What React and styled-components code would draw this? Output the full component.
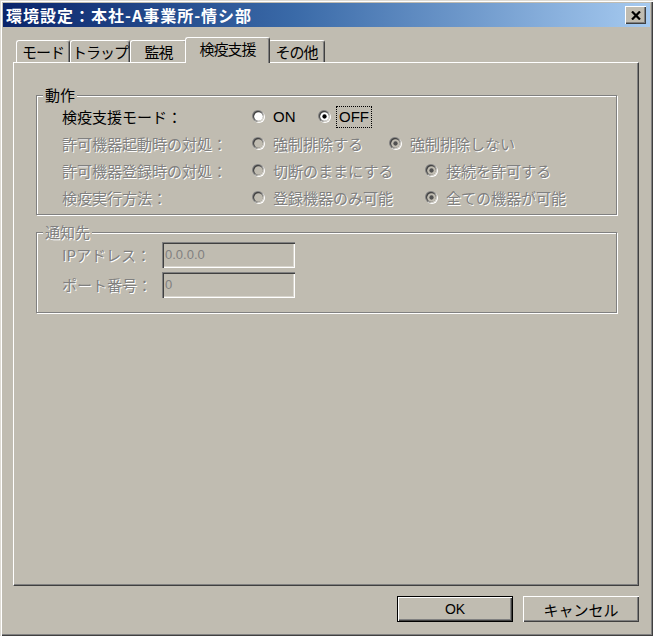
import React from "react"
import styled, { createGlobalStyle, css } from "styled-components"

const face = "#c0bcb1"
const shade = "#808080"
const dark = "#404040"
const jp = `"Noto Sans CJK JP", "Noto Sans", sans-serif`

const GlobalStyle = createGlobalStyle`
  body {
    margin: 0;
    background: ${face};
    font-family: ${jp};
  }
`

const Window = styled.div`
  width: 653px;
  height: 636px;
  box-sizing: border-box;
  padding: 3px;
  background: ${face};
  display: flex;
  flex-direction: column;
  box-shadow: inset 1px 1px 0 #dedbd4, inset 2px 2px 0 #fff,
    inset -1px -1px 0 ${dark}, inset -2px -2px 0 ${shade};
`

const TitleBar = styled.div`
  height: 24px;
  display: flex;
  align-items: center;
  justify-content: space-between;
  padding: 0 4px 0 3px;
  background: linear-gradient(90deg, #0a246a 0%, #3a6aa8 45%, #a6caf0 100%);
`

const Title = styled.div`
  color: #fff;
  font-weight: 700;
  font-size: 16px;
  letter-spacing: 1px;
  line-height: 20px;
  white-space: nowrap;
`

const CloseButton = styled.div`
  width: 21px;
  height: 18px;
  box-sizing: border-box;
  display: flex;
  align-items: center;
  justify-content: center;
  background: ${face};
  box-shadow: inset 1px 1px 0 #fff, inset -1px -1px 0 ${dark},
    inset -2px -2px 0 ${shade};
`

const Body = styled.div`
  flex: 1;
  display: flex;
  flex-direction: column;
  padding: 10px 11px 11px 10px;
`

const TabStrip = styled.div`
  height: 25px;
  display: flex;
  align-items: flex-end;
  padding-left: 3px;
`

const Tab = styled.div`
  box-sizing: border-box;
  width: ${(p) => p.$w}px;
  height: 22px;
  display: flex;
  align-items: center;
  justify-content: center;
  background: ${face};
  border-top: 1px solid #fff;
  border-left: 1px solid #fff;
  border-right: 1px solid ${dark};
  border-radius: 3px 3px 0 0;
  box-shadow: inset -1px 0 0 ${shade};
  font-size: 15px;
  letter-spacing: -1px;
  line-height: 18px;
  white-space: nowrap;
  color: #000;
  position: relative;
  ${(p) =>
    p.$active &&
    css`
      height: 26px;
      margin: 0 -2px -1px;
      padding-bottom: 3px;
      z-index: 1;
    `}
`

const Panel = styled.div`
  flex: 1;
  border-top: 1px solid #fff;
  border-left: 1px solid #fff;
  border-right: 1px solid ${dark};
  border-bottom: 1px solid ${dark};
  box-shadow: inset -1px -1px 0 ${shade};
  padding: 32px 21px 0 22px;
  display: flex;
  flex-direction: column;
  gap: 17px;
`

const Group = styled.div`
  position: relative;
  border: 1px solid ${shade};
  box-shadow: 1px 1px 0 #fff, inset 1px 1px 0 #fff;
  padding: ${(p) => p.$pad};
  padding-left: 25px;
`

const disabledText = css`
  color: ${shade};
  text-shadow: 1px 1px 0 #fff;
`

const Legend = styled.span`
  position: absolute;
  top: -8px;
  left: 6px;
  padding: 0 2px;
  background: ${face};
  font-size: 15px;
  line-height: 14px;
  ${(p) => (p.$disabled ? disabledText : "color: #000;")}
`

const Row = styled.div`
  height: ${(p) => p.$h}px;
  display: flex;
  align-items: center;
`

const Label = styled.div`
  width: ${(p) => p.$w}px;
  font-size: 15px;
  line-height: 18px;
  white-space: nowrap;
  ${(p) => (p.$disabled ? disabledText : "color: #000;")}
`

const Option = styled.div`
  display: flex;
  align-items: center;
  gap: 8px;
  width: ${(p) => (p.$w ? `${p.$w}px` : "auto")};
  font-size: 15px;
  line-height: 18px;
  white-space: nowrap;
  ${(p) => (p.$disabled ? disabledText : "color: #000;")}
`

const OptionText = styled.span`
  font-family: ${(p) => (p.$latin ? `"Liberation Sans", Arial, sans-serif` : jp)};
  font-size: 15px;
  ${(p) =>
    p.$focus &&
    css`
      outline: 1px dotted #000;
      outline-offset: 1px;
      padding: 0 1px;
      margin-left: -1px;
    `}
`

const Field = styled.div`
  width: 133px;
  height: 26px;
  box-sizing: border-box;
  display: flex;
  align-items: center;
  padding: 0 0 2px 3px;
  background: ${face};
  box-shadow: inset 1px 1px 0 ${shade}, inset 2px 2px 0 ${dark},
    inset -1px -1px 0 #fff, inset -2px -2px 0 #d8d5cd;
  font-family: "Liberation Sans", Arial, sans-serif;
  font-size: 13px;
  color: ${shade};
`

const ButtonRow = styled.div`
  margin-top: 10px;
  display: flex;
  justify-content: flex-end;
  gap: 10px;
`

const Button = styled.div`
  width: 116px;
  height: 26px;
  box-sizing: border-box;
  display: flex;
  align-items: center;
  justify-content: center;
  background: ${face};
  color: #000;
  box-shadow: inset 1px 1px 0 #fff, inset -1px -1px 0 ${dark},
    inset -2px -2px 0 ${shade};
  ${(p) =>
    p.$default &&
    css`
      box-shadow: inset 0 0 0 1px #000, inset 2px 2px 0 #fff,
        inset -2px -2px 0 ${dark}, inset -3px -3px 0 ${shade};
    `}
`

const ButtonText = styled.span`
  font-family: ${(p) => (p.$latin ? `"Liberation Sans", Arial, sans-serif` : jp)};
  font-size: ${(p) => (p.$latin ? "14px" : "15px")};
`

function RadioMark({ checked, disabled }) {
  const fill = disabled ? face : "#fff"
  const dot = disabled ? "#505050" : "#000"
  return (
    <svg width="13" height="13" viewBox="0 0 12 12" style={{ flex: "none" }}>
      <circle cx="6.5" cy="6.5" r="5.5" fill="#fff" />
      <circle cx="5.5" cy="5.5" r="5.5" fill={shade} />
      <circle cx="6.5" cy="6.5" r="4.5" fill="#d8d5cd" />
      <circle cx="5.5" cy="5.5" r="4.5" fill={dark} />
      <circle cx="6" cy="6" r="4" fill={fill} />
      {checked && <circle cx="6" cy="6" r="2" fill={dot} />}
    </svg>
  )
}

const tabs = [
  { label: "モード", w: 54 },
  { label: "トラップ", w: 60 },
  { label: "監視", w: 57 },
  { label: "検疫支援", w: 85, active: true },
  { label: "その他", w: 57 },
]

const actionRows = [
  {
    label: "検疫支援モード：",
    firstW: 66,
    options: [
      { text: "ON", latin: true },
      { text: "OFF", latin: true, checked: true, focus: true },
    ],
  },
  {
    label: "許可機器起動時の対処：",
    disabled: true,
    firstW: 137,
    options: [{ text: "強制排除する" }, { text: "強制排除しない", checked: true }],
  },
  {
    label: "許可機器登録時の対処：",
    disabled: true,
    firstW: 173,
    options: [{ text: "切断のままにする" }, { text: "接続を許可する", checked: true }],
  },
  {
    label: "検疫実行方法：",
    disabled: true,
    firstW: 173,
    options: [{ text: "登録機器のみ可能" }, { text: "全ての機器が可能", checked: true }],
  },
]

const notifyRows = [
  { label: "IPアドレス：", value: "0.0.0.0" },
  { label: "ポート番号：", value: "0" },
]

export default function App() {
  return (
    <>
      <GlobalStyle />
      <Window>
        <TitleBar>
          <Title>環境設定：本社-A事業所-情シ部</Title>
          <CloseButton>
            <svg width="10" height="9" viewBox="0 0 10 9">
              <path d="M1 0.5 L9 8.5 M9 0.5 L1 8.5" stroke="#000" strokeWidth="2.2" />
            </svg>
          </CloseButton>
        </TitleBar>
        <Body>
          <TabStrip>
            {tabs.map((t) => (
              <Tab key={t.label} $w={t.w} $active={t.active}>
                {t.label}
              </Tab>
            ))}
          </TabStrip>
          <Panel>
            <Group $pad="7px 0 3px">
              <Legend>動作</Legend>
              {actionRows.map((r) => (
                <Row key={r.label} $h={27}>
                  <Label $w={190} $disabled={r.disabled}>
                    {r.label}
                  </Label>
                  {r.options.map((o, i) => (
                    <Option key={o.text} $w={i === 0 ? r.firstW : 0} $disabled={r.disabled}>
                      <RadioMark checked={o.checked} disabled={r.disabled} />
                      <OptionText $latin={o.latin} $focus={o.focus}>
                        {o.text}
                      </OptionText>
                    </Option>
                  ))}
                </Row>
              ))}
            </Group>
            <Group $pad="7px 0 12px">
              <Legend $disabled>通知先</Legend>
              {notifyRows.map((r) => (
                <Row key={r.label} $h={30}>
                  <Label $w={100} $disabled>
                    {r.label}
                  </Label>
                  <Field>{r.value}</Field>
                </Row>
              ))}
            </Group>
          </Panel>
          <ButtonRow>
            <Button $default>
              <ButtonText $latin>OK</ButtonText>
            </Button>
            <Button>
              <ButtonText>キャンセル</ButtonText>
            </Button>
          </ButtonRow>
        </Body>
      </Window>
    </>
  )
}
